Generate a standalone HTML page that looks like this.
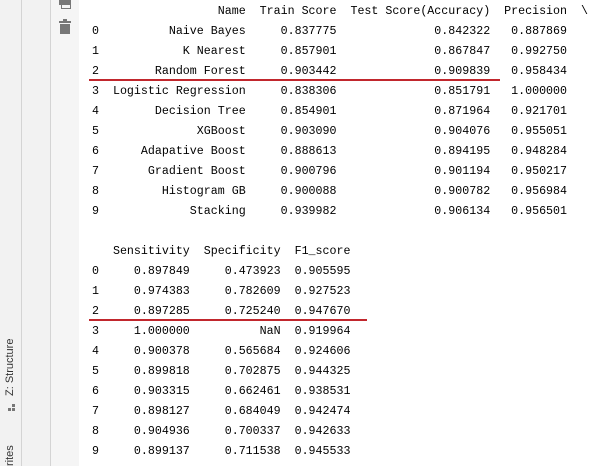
<!DOCTYPE html>
<html><head><style>
body{margin:0;width:604px;height:466px;overflow:hidden;background:#fff;position:relative;font-family:"Liberation Sans",sans-serif}
.s1{position:absolute;left:0;top:0;width:21px;height:466px;background:#f2f2f2;border-right:1px solid #d4d4d4}
.s2{position:absolute;left:22px;top:0;width:28px;height:466px;background:#f2f2f2;border-right:1px solid #d4d4d4}
.s3{position:absolute;left:51px;top:0;width:28px;height:466px;background:#f5f5f5}
pre{position:absolute;left:92px;top:2px;margin:0;font-family:"Liberation Mono",monospace;font-size:11.65px;line-height:20px;color:#000}
.r{position:absolute;height:2px;background:#c1272d}
.v{position:absolute;transform:rotate(-90deg);transform-origin:left top;font-size:11px;color:#333;white-space:nowrap}
</style></head><body>
<div class="s1"></div><div class="s2"></div><div class="s3"></div>
<div style="position:absolute;left:59px;top:0;width:12px;height:5px;background:#777"></div>
<div style="position:absolute;left:61px;top:5px;width:8px;height:3px;border:1px solid #777;border-top:none"></div>
<div style="position:absolute;left:59px;top:21px;width:12px;height:2px;background:#777"></div>
<div style="position:absolute;left:63px;top:19px;width:4px;height:2px;background:#777"></div>
<div style="position:absolute;left:60px;top:24px;width:10px;height:10px;background:#777"></div>
<div class="v" style="left:4px;top:396px">Z: Structure</div>
<div style="position:absolute;left:8px;top:408px;width:3px;height:3px;background:#777"></div>
<div style="position:absolute;left:12px;top:408px;width:3px;height:3px;background:#777"></div>
<div style="position:absolute;left:12px;top:404px;width:3px;height:3px;background:#777"></div>
<div class="v" style="left:4px;top:466px">rites</div>
<pre>                  Name  Train Score  Test Score(Accuracy)  Precision  \
0          Naive Bayes     0.837775              0.842322   0.887869
1            K Nearest     0.857901              0.867847   0.992750
2        Random Forest     0.903442              0.909839   0.958434
3  Logistic Regression     0.838306              0.851791   1.000000
4        Decision Tree     0.854901              0.871964   0.921701
5              XGBoost     0.903090              0.904076   0.955051
6      Adapative Boost     0.888613              0.894195   0.948284
7       Gradient Boost     0.900796              0.901194   0.950217
8         Histogram GB     0.900088              0.900782   0.956984
9             Stacking     0.939982              0.906134   0.956501

   Sensitivity  Specificity  F1_score
0     0.897849     0.473923  0.905595
1     0.974383     0.782609  0.927523
2     0.897285     0.725240  0.947670
3     1.000000          NaN  0.919964
4     0.900378     0.565684  0.924606
5     0.899818     0.702875  0.944325
6     0.903315     0.662461  0.938531
7     0.898127     0.684049  0.942474
8     0.904936     0.700337  0.942633
9     0.899137     0.711538  0.945533</pre>
<div class="r" style="left:89px;top:79px;width:411px"></div>
<div class="r" style="left:89px;top:319px;width:278px"></div>
</body></html>
